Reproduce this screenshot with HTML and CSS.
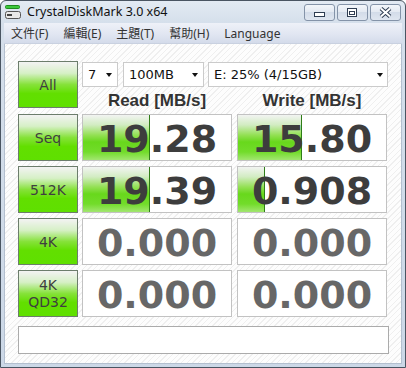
FILE: index.html
```html
<!DOCTYPE html>
<html lang="zh-Hant">
  <head>
    <meta charset="UTF-8" />
    <title>CrystalDiskMark 3.0 x64</title>
    <link rel="stylesheet" href="styles.css">
  </head>
  <body>
    <div class="window">
      <div class="titlebar">
        <svg class="app-icon" width="16" height="14" viewBox="0 0 16 14">
          <rect x="0.5" y="0.5" width="14" height="3" rx="1" fill="#3cc83c" stroke="#1f8a1f" />
          <rect x="0.5" y="6.5" width="15" height="7" rx="2" fill="#e8e8e8" stroke="#555" />
          <rect x="2" y="9" width="5" height="2" fill="#444" />
        </svg>
        <span class="title">CrystalDiskMark 3.0 x64</span>
        <div class="caption-btns">
          <div class="cap-btn">
            <svg width="31" height="17" viewBox="0 0 31 17">
              <rect x="10.5" y="8.5" width="10" height="4" fill="#fff" stroke="#2f3d52" />
            </svg>
          </div>
          <div class="cap-btn">
            <svg width="31" height="17" viewBox="0 0 31 17">
              <rect x="10.5" y="4.5" width="9" height="8" fill="#fff" stroke="#2f3d52" />
              <rect x="12.5" y="7.5" width="5" height="3" fill="#fff" stroke="#2f3d52" />
            </svg>
          </div>
          <div class="cap-btn">
            <svg width="31" height="17" viewBox="0 0 31 17">
              <path d="M11 4.5 L20 12.5 M20 4.5 L11 12.5" stroke="#2f3d52" stroke-width="4" />
              <path d="M11 4.5 L20 12.5 M20 4.5 L11 12.5" stroke="#fff" stroke-width="2" />
            </svg>
          </div>
        </div>
      </div>

      <div class="menubar">
        <span>文件(F)</span>
        <span>編輯(E)</span>
        <span>主題(T)</span>
        <span>幫助(H)</span>
        <span>Language</span>
      </div>

      <div class="client">
        <div class="top">
          <div class="test-btn">All</div>
          <div class="top-right">
            <div class="selects">
              <div class="select sel-count">7<i class="arrow"></i></div>
              <div class="select sel-size">100MB<i class="arrow"></i></div>
              <div class="select sel-drive">E: 25% (4/15GB)<i class="arrow"></i></div>
            </div>
            <div class="heads">
              <div class="head">Read [MB/s]</div>
              <div class="head">Write [MB/s]</div>
            </div>
          </div>
        </div>

        <div class="row">
          <div class="test-btn">Seq</div>
          <div class="cell read"><div class="bar" style="width: 45.5%"></div><span>19.28</span></div>
          <div class="cell write"><div class="bar" style="width: 43.5%"></div><span>15.80</span></div>
        </div>

        <div class="row">
          <div class="test-btn">512K</div>
          <div class="cell read"><div class="bar" style="width: 45.5%"></div><span>19.39</span></div>
          <div class="cell write"><div class="bar" style="width: 18.5%"></div><span>0.908</span></div>
        </div>

        <div class="row">
          <div class="test-btn">4K</div>
          <div class="cell read zero"><span>0.000</span></div>
          <div class="cell write zero"><span>0.000</span></div>
        </div>

        <div class="row">
          <div class="test-btn two-line">4K<br>QD32</div>
          <div class="cell read zero"><span>0.000</span></div>
          <div class="cell write zero"><span>0.000</span></div>
        </div>

        <div class="status"></div>
      </div>
    </div>
  </body>
</html>
```

FILE: styles.css
```css
* {
  box-sizing: border-box;
}

body {
  margin: 0;
  background: #fff;
  font-family: 'DejaVu Sans', Verdana, sans-serif;
}

.window {
  width: 406px;
  height: 368px;
  border: 1px solid #4a5562;
  border-radius: 6px 6px 0 0;
  background: linear-gradient(#e3eaf3, #d5dfeb 22px, #ccd8e7);
  padding: 0 3px 3px;
  display: flex;
  flex-direction: column;
}

/* title bar */
.titlebar {
  height: 22px;
  display: flex;
  align-items: flex-start;
}

.app-icon {
  margin: 4px 0 0 1px;
}

.title {
  margin-left: 6px;
  margin-top: 2px;
  font-family: 'Noto Sans', sans-serif;
  font-size: 12.5px;
  line-height: 18px;
  color: #111;
}

.caption-btns {
  margin-left: auto;
  margin-right: 1px;
  margin-top: 3px;
  display: flex;
  gap: 2px;
}

.cap-btn {
  width: 31px;
  height: 17px;
  border: 1px solid #8493a8;
  border-radius: 3px;
  background: linear-gradient(#f3f6fa, #e2e8f1 50%, #d3dce9 50%, #dfe6f0);
  overflow: hidden;
}

.cap-btn svg {
  display: block;
  margin: -1px 0 0 -1px;
}

/* menu */
.menubar {
  height: 21px;
  display: flex;
  align-items: center;
  gap: 15px;
  padding-left: 7px;
  background: linear-gradient(#eef1f8, #e0e5f1 60%, #d4dbea);
  border-bottom: 1px solid #c9d1e0;
  font-family: 'Noto Sans', 'Noto Sans CJK TC', sans-serif;
  font-size: 12px;
  color: #333;
}

/* client area */
.client {
  flex: 1;
  border: 1px solid #b3bfcf;
  border-top: none;
  padding: 17px 0 0 13px;
  background: repeating-linear-gradient(-45deg, #fdfdfd 0 3px, #efefef 3px 4px);
}

.top {
  display: flex;
  height: 47px;
}

.test-btn {
  width: 60px;
  height: 47px;
  flex: none;
  border: 1px solid #6c7d6c;
  background: linear-gradient(#f3f3f3, #d6f0c6 25%, #86e23a 50%, #62df00 70%, #5fe000);
  display: flex;
  align-items: center;
  justify-content: center;
  text-align: center;
  font-size: 14px;
  color: #3f3f3f;
}

.test-btn.two-line {
  line-height: 17px;
}

.top-right {
  margin-left: 4px;
  width: 306px;
}

.selects {
  display: flex;
  margin-top: 1px;
  height: 25px;
}

.select {
  position: relative;
  height: 25px;
  border: 1px solid #cbcbcb;
  background: #fff;
  font-size: 13px;
  line-height: 23px;
  padding-left: 5px;
  color: #111;
}

.sel-count {
  width: 36px;
}

.sel-size {
  width: 81px;
  margin-left: 5px;
}

.sel-drive {
  width: 180px;
  margin-left: 4px;
}

.arrow {
  position: absolute;
  right: 5px;
  top: 10px;
  border-left: 3px solid transparent;
  border-right: 3px solid transparent;
  border-top: 4px solid #111;
}

.sel-drive .arrow {
  right: 4px;
}

.heads {
  display: flex;
  height: 26px;
}

.head {
  width: 150px;
  text-align: center;
  font-family: 'Liberation Sans', Arial, sans-serif;
  font-weight: bold;
  font-size: 17px;
  line-height: 28px;
  color: #333;
}

.head + .head {
  margin-left: 5px;
}

/* result rows */
.row {
  display: flex;
  margin-top: 5px;
}

.top + .row {
  margin-top: 6px;
}

.cell {
  position: relative;
  width: 150px;
  height: 47px;
  border: 1px solid #c2c2c2;
  background: #fff;
  padding-top: 4px;
  text-align: center;
  font-weight: bold;
  font-size: 38px;
  line-height: 41px;
  color: #3d3d3d;
}

.cell.read {
  margin-left: 4px;
}

.cell.write {
  margin-left: 5px;
}

.cell.zero {
  color: #676767;
}

.cell span {
  position: relative;
}

.bar {
  position: absolute;
  left: 0;
  top: 0;
  bottom: 0;
  border-right: 1px solid #2f7d18;
  background: linear-gradient(#f2f4f2, #d2ecc2 22%, #92e052 45%, #68d81c 60%, #72dc2a 82%, #a2e670);
}

.status {
  width: 371px;
  height: 28px;
  margin-top: 9px;
  border: 1px solid #ababab;
  background: #fff;
}
```
